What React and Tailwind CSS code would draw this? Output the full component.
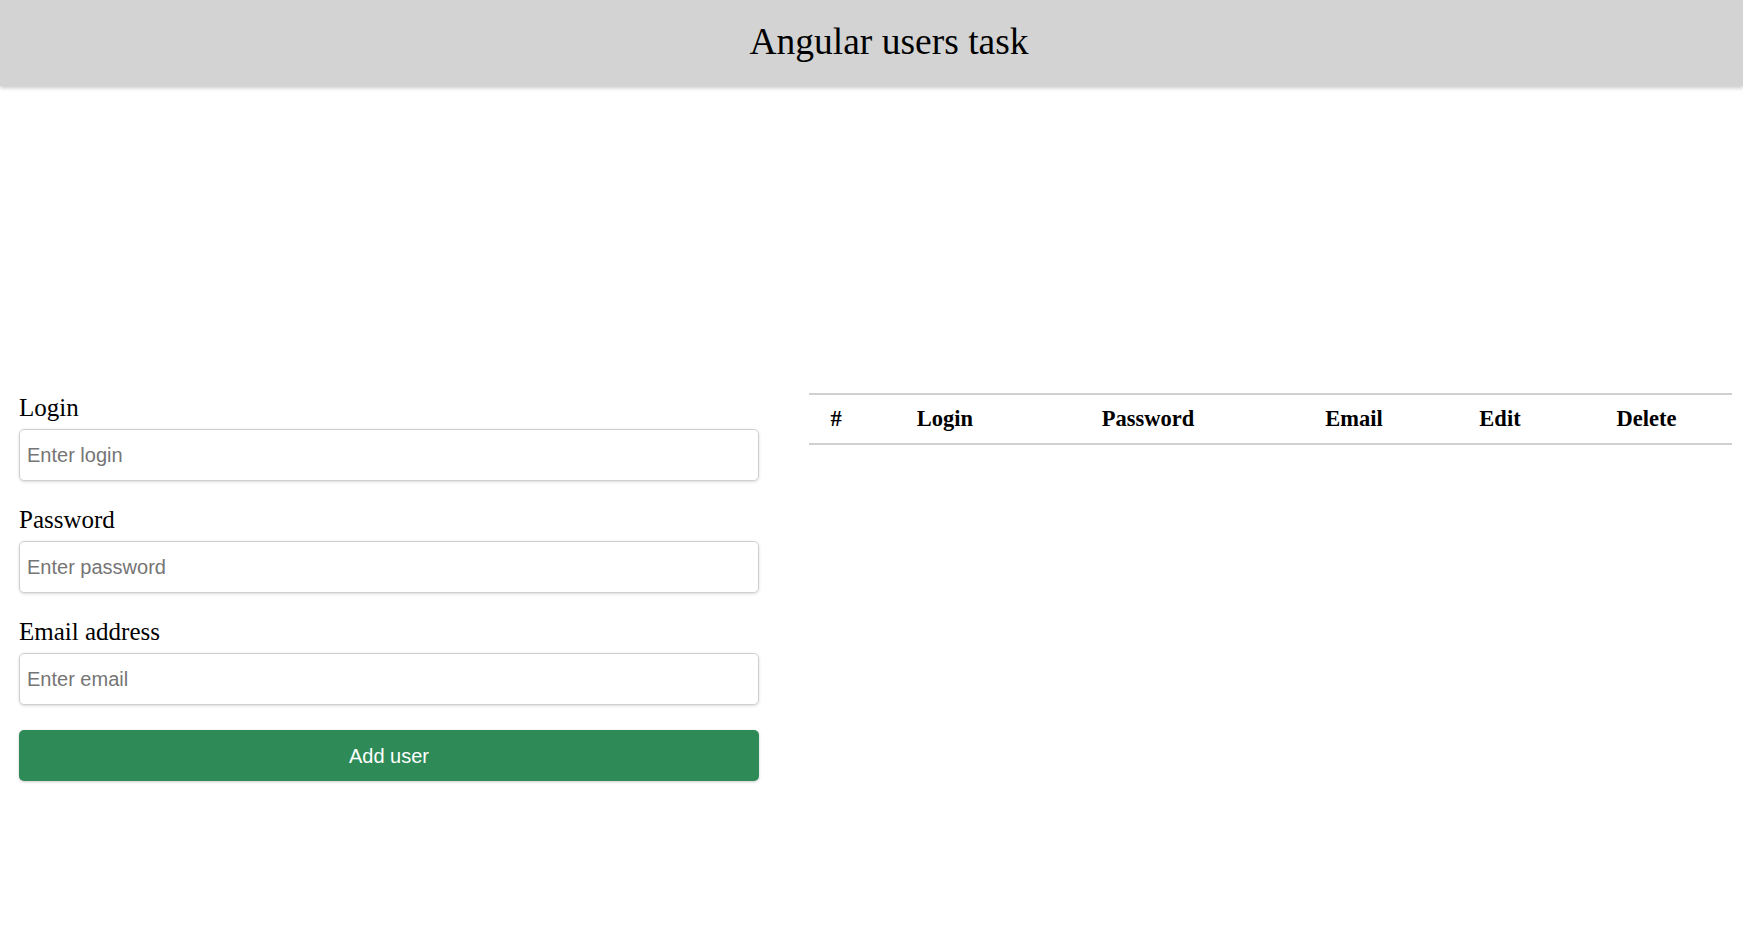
const fields = [
    { id: 'login', label: 'Login', placeholder: 'Enter login', type: 'text' },
    { id: 'password', label: 'Password', placeholder: 'Enter password', type: 'password' },
    { id: 'email', label: 'Email address', placeholder: 'Enter email', type: 'email' },
];

const columns = [
    { title: '#', width: 'w-[54px]' },
    { title: 'Login', width: 'w-[164px]' },
    { title: 'Password', width: 'w-[242px]' },
    { title: 'Email', width: 'w-[170px]' },
    { title: 'Edit', width: 'w-[122px]' },
    { title: 'Delete', width: 'w-[171px]' },
];

const App = () => {
    return (
        <div className="min-h-[936px] bg-white font-['Liberation_Serif',serif] text-black">
            <header className="h-[86px] bg-[#d3d3d3] shadow-[0_2px_4px_rgba(0,0,0,0.22)] flex items-center justify-center pl-[35px]">
                <h1 className="text-[37.5px] leading-none pb-[2px]">Angular users task</h1>
            </header>

            <main className="flex items-start pt-[307px] pl-[19px]">
                <form className="w-[740px]" onSubmit={(e) => e.preventDefault()}>
                    {fields.map((f) => (
                        <div key={f.id} className="mb-[24px]">
                            <label htmlFor={f.id} className="block text-[25px] leading-[29px] mb-[7px]">
                                {f.label}
                            </label>
                            <input
                                id={f.id}
                                type={f.type}
                                placeholder={f.placeholder}
                                className="block w-full h-[52px] px-[7px] rounded-[5px] border border-[#cfcfcf] shadow-[0_1px_3px_rgba(0,0,0,0.15)] font-['Liberation_Sans',sans-serif] text-[20px] placeholder:text-[#757575] outline-none"
                            />
                        </div>
                    ))}
                    <button
                        type="submit"
                        className="mt-[1px] w-full h-[51px] rounded-[5px] bg-[#2e8b57] text-white font-['Liberation_Sans',sans-serif] text-[20px] shadow-[0_1px_3px_rgba(0,0,0,0.2)]"
                    >
                        Add user
                    </button>
                </form>

                <table className="ml-[50px] w-[923px] table-fixed border-collapse">
                    <thead>
                        <tr className="h-[50px] border-y-2 border-[#d0d0d0]">
                            {columns.map((c) => (
                                <th key={c.title} className={`${c.width} text-center font-bold text-[22.5px] leading-none p-0`}>
                                    {c.title}
                                </th>
                            ))}
                        </tr>
                    </thead>
                    <tbody></tbody>
                </table>
            </main>
        </div>
    );
};

export default App;
